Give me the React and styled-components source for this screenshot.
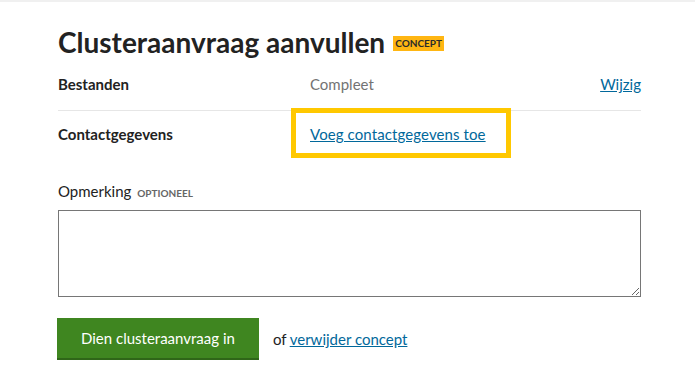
import React from 'react';
import styled, { createGlobalStyle } from 'styled-components';

const GlobalStyle = createGlobalStyle`
  html, body {
    margin: 0;
    padding: 0;
    background: #ffffff;
  }
  body {
    font-family: Lato, "Liberation Sans", sans-serif;
    color: #222222;
    border-top: 2px solid #f0f0f0;
  }
`;

const Page = styled.main`
  box-sizing: border-box;
  width: 100%;
  padding: 0 54px 0 58px;
`;

const Heading = styled.h1`
  display: flex;
  align-items: center;
  gap: 8px;
  margin: 23px 0 0 0;
  font-size: 28px;
  line-height: 34px;
  font-weight: 700;
  color: #222222;
`;

const Badge = styled.span`
  display: inline-block;
  background: #ffb612;
  color: #2b2b2b;
  font-size: 10px;
  font-weight: 700;
  line-height: 15px;
  padding: 0 2px;
  margin-top: 2px;
`;

const SummaryList = styled.dl`
  margin: 2px 0 0 0;
`;

const Row = styled.div`
  display: flex;
  align-items: flex-start;
  padding: 12px 0 ${p => (p.$last ? '13px' : '15px')} 0;
  border-bottom: ${p => (p.$last ? 'none' : '1px solid #e6e6e6')};
`;

const Key = styled.dt`
  width: 252px;
  flex: none;
  font-size: 15px;
  font-weight: 700;
  line-height: 22px;
`;

const Value = styled.dd`
  flex: 1;
  margin: 0;
  font-size: 15px;
  line-height: 22px;
  color: ${p => (p.$muted ? '#737373' : '#222222')};
`;

const Link = styled.a`
  color: #01689b;
  text-decoration: underline;
  font-size: 15px;
  cursor: pointer;
`;

/* focus ring drawn around the link, as in the screenshot */
const FocusLink = styled(Link)`
  display: inline-block;
  position: relative;
  letter-spacing: 0.1px;
  &::after {
    content: '';
    position: absolute;
    left: -19px;
    right: -25px;
    top: -15px;
    bottom: -13px;
    border: 5px solid #ffc800;
  }
`;

const Action = styled.div`
  flex: none;
  font-size: 15px;
  line-height: 22px;
`;

const Field = styled.div`
  margin-top: 22px;
  display: flex;
  flex-direction: column;
`;

const Label = styled.label`
  font-size: 15px;
  line-height: 22px;
  margin-bottom: 6px;
`;

const Hint = styled.span`
  font-size: 10px;
  font-weight: 700;
  color: #666666;
  margin-left: 2px;
`;

const TextArea = styled.textarea`
  box-sizing: border-box;
  width: 100%;
  height: 87px;
  border: 1px solid #767676;
  border-radius: 0;
  font-family: inherit;
  font-size: 15px;
  padding: 6px;
  resize: vertical;
  display: block;
`;

const Actions = styled.div`
  display: flex;
  align-items: center;
  gap: 14px;
  margin-top: 21px;
  font-size: 15px;
`;

const PrimaryButton = styled.button`
  box-sizing: border-box;
  height: 42px;
  padding: 0 24px;
  background: #3f8620;
  border: none;
  border-bottom: 2px solid #2f6618;
  color: #ffffff;
  font-family: inherit;
  font-size: 15px;
  margin-left: -1px;
  cursor: pointer;
`;

const Aside = styled.span`
  color: #222222;
`;

export default function App() {
  return (
    <>
      <GlobalStyle />
      <Page>
        <Heading>
          Clusteraanvraag aanvullen <Badge>CONCEPT</Badge>
        </Heading>
        <SummaryList>
          <Row>
            <Key>Bestanden</Key>
            <Value $muted>Compleet</Value>
            <Action>
              <Link>Wijzig</Link>
            </Action>
          </Row>
          <Row $last>
            <Key>Contactgegevens</Key>
            <Value>
              <FocusLink>Voeg contactgegevens toe</FocusLink>
            </Value>
          </Row>
        </SummaryList>
        <Field>
          <Label>
            Opmerking <Hint>OPTIONEEL</Hint>
          </Label>
          <TextArea />
        </Field>
        <Actions>
          <PrimaryButton>Dien clusteraanvraag in</PrimaryButton>
          <Aside>
            of <Link>verwijder concept</Link>
          </Aside>
        </Actions>
      </Page>
    </>
  );
}
